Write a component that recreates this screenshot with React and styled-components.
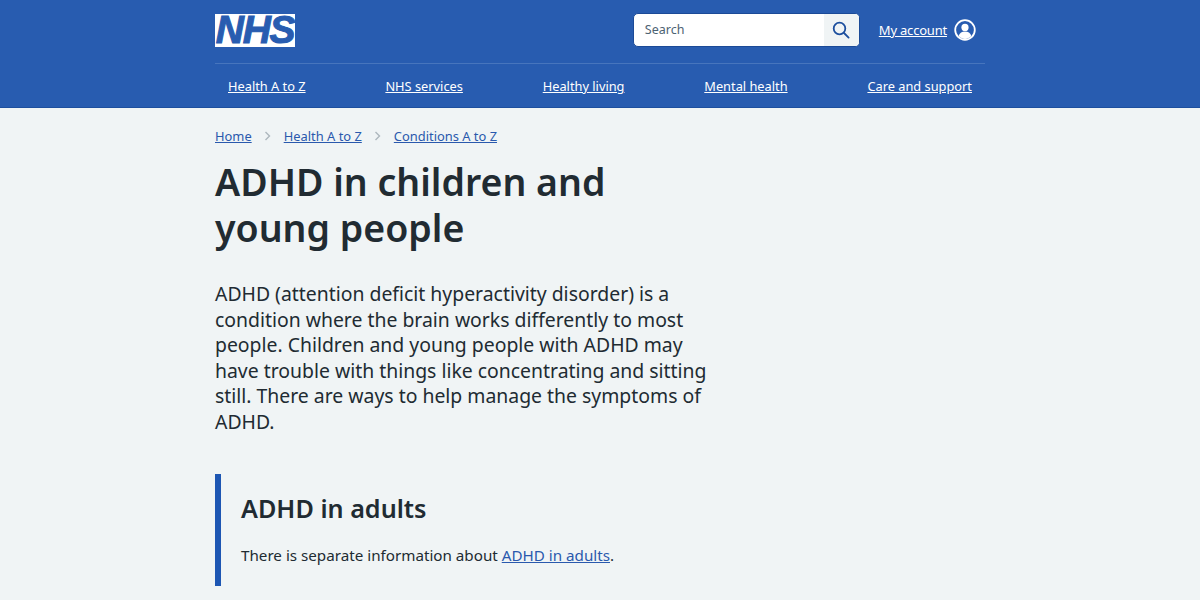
import React from 'react'
import styled, { createGlobalStyle } from 'styled-components'

const GlobalStyle = createGlobalStyle`
  html, body {
    margin: 0;
    padding: 0;
    background: #f0f4f5;
    color: #212b32;
    font-family: "Noto Sans", "Open Sans", sans-serif;
  }
`

const Page = styled.div`
  height: 600px;
  overflow: hidden;
`

const Header = styled.header`
  height: 108px;
  background: #285cb0;
  border-bottom: 1px solid #1d4f9e;
  box-sizing: border-box;
`

const Inner = styled.div`
  width: 770px;
  margin: 0 auto;
`

const TopRow = styled.div`
  display: flex;
  align-items: center;
  justify-content: space-between;
  height: 64px;
  padding-bottom: 3px;
  box-sizing: border-box;
  border-bottom: 1px solid #4775bd;
`

const Logo = styled.div`
  width: 80px;
  height: 33px;
  box-sizing: border-box;
  background: #fff;
  color: #285cb0;
  font-family: "Liberation Sans", sans-serif;
  font-weight: 700;
  font-style: italic;
  font-size: 39px;
  line-height: 32px;
  letter-spacing: -1.3px;
  -webkit-text-stroke: 1px #285cb0;
  text-align: center;
`

const Tools = styled.div`
  display: flex;
  align-items: center;
  gap: 19px;
  padding-right: 9px;
`

const SearchBox = styled.div`
  display: flex;
  width: 227px;
  height: 34px;
  box-sizing: border-box;
  background: #fff;
  border: 1px solid #1b4a97;
  border-radius: 5px;
  overflow: hidden;
`

const SearchText = styled.div`
  flex: 1;
  padding-left: 11px;
  font-size: 12.5px;
  line-height: 32px;
  color: #4c6272;
`

const SearchButton = styled.div`
  width: 35px;
  background: #f0f4f5;
  display: flex;
  align-items: center;
  justify-content: center;
  color: #1d4f9e;
`

const Account = styled.a`
  display: flex;
  align-items: center;
  gap: 7px;
  color: #fff;
  font-size: 13px;
  letter-spacing: -0.2px;
  text-decoration: underline;
`

const Nav = styled.nav`
  display: flex;
  justify-content: space-between;
  height: 44px;
  padding: 0 13px;
  align-items: center;
`

const NavLink = styled.a`
  color: #fff;
  font-size: 12.8px;
  text-decoration: underline;
`

const Crumbs = styled.div`
  display: flex;
  align-items: center;
  padding-top: 18px;
  height: 19px;
  font-size: 12.9px;
`

const Crumb = styled.a`
  color: #2a59ad;
  text-decoration: underline;
`

const Chevron = styled.span`
  display: flex;
  width: 32px;
  justify-content: center;
  color: #aeb7bd;
`

const Content = styled.main`
  width: 495px;
`

const Title = styled.h1`
  margin: 14px 0 0;
  font-size: 37.5px;
  font-weight: 600;
  line-height: 45.5px;
  color: #212b32;
`

const Lead = styled.p`
  margin: 31px 0 0;
  font-size: 19.4px;
  line-height: 25.6px;
`

const Inset = styled.aside`
  margin-top: 39px;
  height: 112px;
  box-sizing: border-box;
  border-left: 6px solid #1d56b3;
  padding: 18px 0 0 20px;
`

const InsetTitle = styled.h2`
  margin: 0;
  font-size: 25.2px;
  font-weight: 600;
  line-height: 32px;
`

const InsetText = styled.p`
  margin: 19px 0 0;
  font-size: 15.2px;
  line-height: 24px;
`

const InsetLink = styled.a`
  color: #2a59ad;
  text-decoration: underline;
`

const SearchIcon = () => (
  <svg width="18" height="18" viewBox="0 0 18 18" fill="none" stroke="currentColor" strokeWidth="1.8">
    <circle cx="7.5" cy="7.5" r="5.8" />
    <path d="M12 12l4.6 4.6" strokeLinecap="round" />
  </svg>
)

const UserIcon = () => (
  <svg width="22" height="22" viewBox="0 0 22 22">
    <circle cx="11" cy="11" r="9.8" fill="#285cb0" stroke="#fff" strokeWidth="1.8" />
    <circle cx="11" cy="8.4" r="3.6" fill="#fff" />
    <path d="M4.6 17c1-3 3.4-4.4 6.4-4.4s5.400 1.400 6.400 4.400c-1.700 1.800-3.900 2.900-6.400 2.900s-4.700-1.100-6.400-2.900z" fill="#fff" />
  </svg>
)

const ChevronIcon = () => (
  <svg width="7" height="10" viewBox="0 0 7 10" fill="none" stroke="currentColor" strokeWidth="1.4">
    <path d="M1.500 1l4 4-4 4" />
  </svg>
)

const navItems = ['Health A to Z', 'NHS services', 'Healthy living', 'Mental health', 'Care and support']

export default function App() {
  return (
    <Page>
      <GlobalStyle />
      <Header>
        <Inner>
          <TopRow>
            <Logo>NHS</Logo>
            <Tools>
              <SearchBox>
                <SearchText>Search</SearchText>
                <SearchButton><SearchIcon /></SearchButton>
              </SearchBox>
              <Account>My account <UserIcon /></Account>
            </Tools>
          </TopRow>
          <Nav>
            {navItems.map(item => <NavLink key={item}>{item}</NavLink>)}
          </Nav>
        </Inner>
      </Header>
      <Inner>
        <Crumbs>
          <Crumb>Home</Crumb>
          <Chevron><ChevronIcon /></Chevron>
          <Crumb>Health A to Z</Crumb>
          <Chevron><ChevronIcon /></Chevron>
          <Crumb>Conditions A to Z</Crumb>
        </Crumbs>
        <Content>
          <Title>ADHD in children and young people</Title>
          <Lead>
            ADHD (attention deficit hyperactivity disorder) is a condition where the brain works differently to most people. Children and young people with ADHD may have trouble with things like concentrating and sitting still. There are ways to help manage the symptoms of ADHD.
          </Lead>
          <Inset>
            <InsetTitle>ADHD in adults</InsetTitle>
            <InsetText>
              There is separate information about <InsetLink>ADHD in adults</InsetLink>.
            </InsetText>
          </Inset>
        </Content>
      </Inner>
    </Page>
  )
}
